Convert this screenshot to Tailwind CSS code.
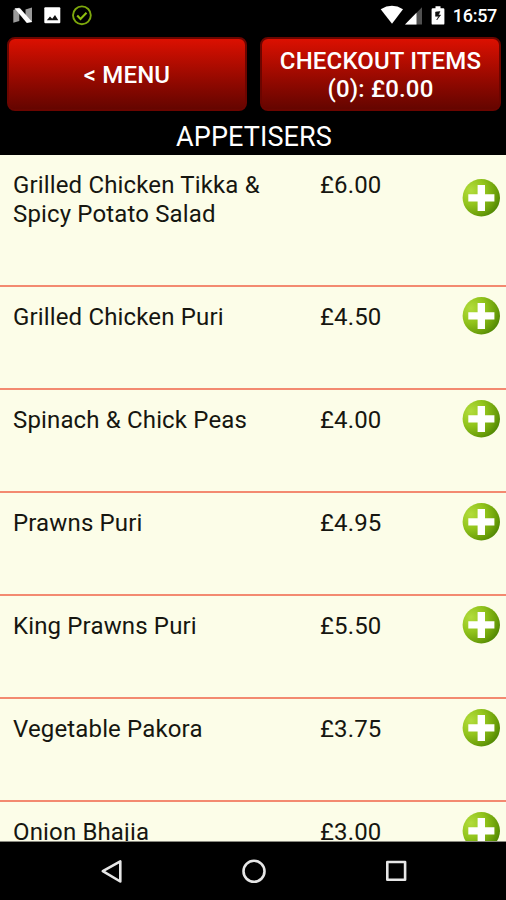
<!DOCTYPE html>
<html lang="en">
<head>
    <meta charset="UTF-8" />
    <meta name="viewport" content="width=device-width, initial-scale=1.0">
    <title>Appetisers</title>
    <script src="https://cdn.jsdelivr.net/npm/@tailwindcss/browser@4"></script>
    <style>
        body {
            font-family: Roboto, 'Liberation Sans', sans-serif;
        }
    </style>
</head>
<body class="bg-black">
    <!-- Shared gradients and add icon -->
    <svg class="absolute w-0 h-0" aria-hidden="true">
        <defs>
            <radialGradient id="green" cx="0.22" cy="0.3" r="0.85">
                <stop offset="0" stop-color="#b2dc3c" />
                <stop offset="0.45" stop-color="#92c41c" />
                <stop offset="0.8" stop-color="#6ca00a" />
                <stop offset="1" stop-color="#4f8604" />
            </radialGradient>
            <symbol id="add" viewBox="0 0 38 38">
                <circle cx="19.3" cy="18.8" r="18.7" fill="url(#green)" />
                <path d="M15.6 6h7.400v9.200h9.400v7.400H23v9.400h-7.400v-9.400H6.300v-7.400h9.300z" fill="#fff" />
            </symbol>
        </defs>
    </svg>

    <div class="w-[506px] h-[900px] flex flex-col overflow-hidden bg-black">
        <!-- Status bar -->
        <div class="h-[31px] shrink-0 flex items-center justify-between pl-3 pr-[9px] text-white">
            <svg class="w-20 h-[31px]" viewBox="0 0 80 31">
                <path d="M1.300 10l6-2.500v13.500l-6 1.800zM13.500 9.500l6.500-2V22l-6.500-1z" fill="#9a9a9a" />
                <path d="M2.500 8.300h5.500L20.200 22l-5.400 1z" fill="#fff" />
                <rect x="32.300" y="7.300" width="16" height="16" rx="1" fill="#fff" />
                <path d="M34.800 20.300l3.200-3.800 2.200 2.200 2.800-3.700 3.300 5.300z" fill="#111" />
                <circle cx="69.900" cy="15.300" r="8.900" fill="none" stroke="#7da80c" stroke-width="1.900" />
                <path d="M65.200 15.600l3.300 3.400 6-6.200" fill="none" stroke="#8fbe10" stroke-width="2.100" />
            </svg>
            <div class="flex items-center">
                <svg class="w-[73px] h-[31px]" viewBox="380 0 73 31">
                    <path d="M380.700 9.300Q392 2.400 403 9.300L392 23.800z" fill="#fff" />
                    <path d="M405 24.500L422 7.200v17.300z" fill="#505050" />
                    <path d="M405 24.500L416.500 12.800v11.700z" fill="#fff" />
                    <path d="M435.500 6.200h5v2h2.700q1.200 0 1.200 1.200v14q0 1.200-1.200 1.200h-10.400q-1.200 0-1.200-1.200v-14q0-1.200 1.200-1.200h2.700z" fill="#fff" />
                    <path d="M440 11.500l-4.500.5v4.300h3.200L436.700 20l4-5h-2.200z" fill="#111" stroke="#111" stroke-width="0.500" />
                </svg>
                <span class="text-[18px] leading-[31px] font-medium tracking-[-0.3px]">16:57</span>
            </div>
        </div>

        <!-- Menu / checkout buttons -->
        <div class="h-[88px] shrink-0 flex gap-[13px] pt-[6px] pl-[7px] pr-[5px]">
            <button class="w-60 h-[74px] shrink-0 rounded-lg border-2 border-[#6b0500] bg-linear-to-b from-[#dc1001] to-[#650500] text-white text-[24px] leading-7 font-medium tracking-[0.15px] pt-[2px]">&lt; MENU</button>
            <button class="w-[241px] h-[74px] shrink-0 rounded-lg border-2 border-[#6b0500] bg-linear-to-b from-[#dc1001] to-[#650500] text-white text-[24px] leading-7 font-medium tracking-[0.15px] pt-[2px] whitespace-nowrap">CHECKOUT ITEMS<br>(0): £0.00</button>
        </div>

        <!-- Section title -->
        <h1 class="h-[36px] shrink-0 pl-[2px] text-center text-white text-[27px] leading-[36px] tracking-[0.1px]">APPETISERS</h1>

        <!-- Dishes -->
        <ul class="h-[687px] shrink-0 overflow-hidden bg-[#fcfde8] border-b border-[#8a8a80] text-[24px] leading-[28.5px] tracking-[0.15px] text-[#161610]">
            <li class="h-[132px] flex border-b-2 border-[#f38a70] pl-[13px] pr-[6px] pt-4">
                <span class="w-[307px]">Grilled Chicken Tikka &amp;<br>Spicy Potato Salad</span>
                <span>£6.00</span>
                <svg class="size-[38px] ml-auto mt-2"><use href="#add" /></svg>
            </li>
            <li class="h-[103px] flex border-b-2 border-[#f38a70] pl-[13px] pr-[6px] pt-4">
                <span class="w-[307px]">Grilled Chicken Puri</span>
                <span>£4.50</span>
                <svg class="size-[38px] ml-auto -mt-[6px]"><use href="#add" /></svg>
            </li>
            <li class="h-[103px] flex border-b-2 border-[#f38a70] pl-[13px] pr-[6px] pt-4">
                <span class="w-[307px]">Spinach &amp; Chick Peas</span>
                <span>£4.00</span>
                <svg class="size-[38px] ml-auto -mt-[6px]"><use href="#add" /></svg>
            </li>
            <li class="h-[103px] flex border-b-2 border-[#f38a70] pl-[13px] pr-[6px] pt-4">
                <span class="w-[307px]">Prawns Puri</span>
                <span>£4.95</span>
                <svg class="size-[38px] ml-auto -mt-[6px]"><use href="#add" /></svg>
            </li>
            <li class="h-[103px] flex border-b-2 border-[#f38a70] pl-[13px] pr-[6px] pt-4">
                <span class="w-[307px]">King Prawns Puri</span>
                <span>£5.50</span>
                <svg class="size-[38px] ml-auto -mt-[6px]"><use href="#add" /></svg>
            </li>
            <li class="h-[103px] flex border-b-2 border-[#f38a70] pl-[13px] pr-[6px] pt-4">
                <span class="w-[307px]">Vegetable Pakora</span>
                <span>£3.75</span>
                <svg class="size-[38px] ml-auto -mt-[6px]"><use href="#add" /></svg>
            </li>
            <li class="h-[103px] flex pl-[13px] pr-[6px] pt-4">
                <span class="w-[307px]">Onion Bhajia</span>
                <span>£3.00</span>
                <svg class="size-[38px] ml-auto -mt-[6px]"><use href="#add" /></svg>
            </li>
        </ul>

        <!-- Navigation bar -->
        <svg class="w-full h-[58px] shrink-0" viewBox="0 842 506 58" fill="none" stroke="#e6e6e6" stroke-width="2.600" stroke-linejoin="round">
            <path d="M102.800 871.200L120.300 861.300v20.200z" />
            <circle cx="254" cy="871.300" r="10.500" />
            <rect x="387.300" y="862" width="17.800" height="17.800" />
        </svg>
    </div>
</body>
</html>
